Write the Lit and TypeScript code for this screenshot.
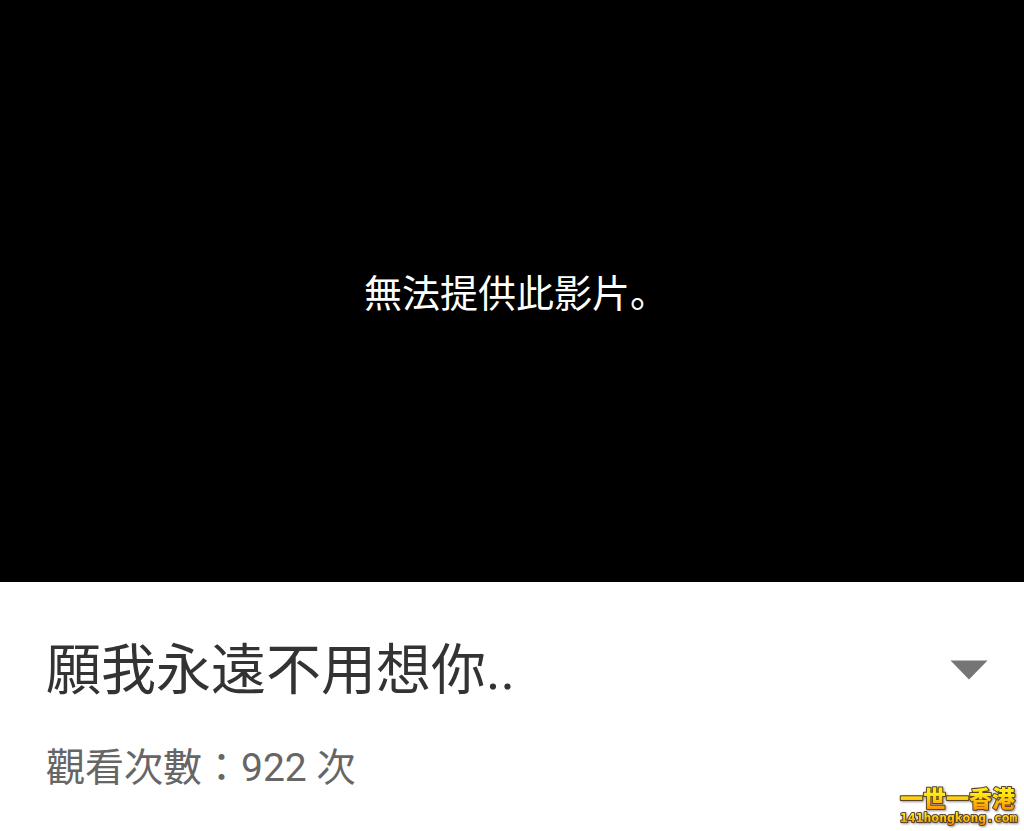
import { LitElement, html, css } from "lit";
import { customElement, property, state } from "lit/decorators.js";

@customElement("video-player")
class VideoPlayer extends LitElement {
  @property() message = "";

  static styles = css`
    :host {
      display: flex;
      align-items: center;
      justify-content: center;
      aspect-ratio: 1024 / 582;
      background: #000;
      color: #fff;
    }
    .message {
      margin: 0;
      padding: 6px 0 0 8px;
      font-size: 38px;
      line-height: 56px;
      font-weight: 400;
    }
  `;

  render() {
    return html`<p class="message" role="status">${this.message}</p>`;
  }
}

@customElement("site-mark")
class SiteMark extends LitElement {
  static styles = css`
    :host {
      display: block;
    }
    svg {
      display: block;
      overflow: visible;
    }
    text {
      fill: url(#gold);
      stroke: #5a4326;
      stroke-width: 2px;
      stroke-linejoin: round;
      paint-order: stroke;
    }
    .name {
      font-family: "Liberation Sans", "Noto Sans CJK TC", sans-serif;
      font-size: 23px;
      font-weight: 900;
    }
    .domain {
      font-family: "DejaVu Sans Mono", monospace;
      font-size: 13px;
      font-weight: 700;
    }
    .shade {
      filter: drop-shadow(1px 1px 1px #0006);
    }
  `;

  render() {
    return html`
      <svg width="120" height="44" viewBox="0 0 120 44" role="img" aria-label="一世一香港 141hongkong.com">
        <defs>
          <linearGradient id="gold" x1="0" y1="0" x2="0" y2="1">
            <stop offset="0.3" stop-color="#ffea10" />
            <stop offset="0.95" stop-color="#ff8a00" />
          </linearGradient>
        </defs>
        <g class="shade">
          <text class="name" x="1" y="23">一世一香港</text>
          <text class="domain" x="1" y="38">141hongkong.com</text>
        </g>
      </svg>
    `;
  }
}

@customElement("app-root")
class AppRoot extends LitElement {
  @state() private expanded = false;

  static styles = css`
    :host {
      display: block;
      position: relative;
      min-height: 100vh;
      background: #fff;
      font-family: Roboto, "Noto Sans CJK JP", sans-serif;
    }
    .details {
      padding: 48px 30px 30px 46px;
    }
    .heading {
      display: flex;
      align-items: center;
      justify-content: space-between;
    }
    .title {
      margin: 0;
      font-size: 55px;
      line-height: 80px;
      font-weight: 400;
      color: #333;
    }
    .toggle {
      display: flex;
      padding: 12px 6px;
      border: 0;
      background: none;
      cursor: pointer;
    }
    .arrow {
      display: block;
      fill: #757575;
    }
    .views {
      margin: 30px 0 0;
      font-size: 39px;
      line-height: 56px;
      color: #666;
    }
    .mark {
      position: absolute;
      right: 5px;
      bottom: 3px;
    }
  `;

  render() {
    return html`
      <main>
        <video-player message="無法提供此影片。"></video-player>
        <section class="details">
          <div class="heading">
            <h1 class="title">願我永遠不用想你..</h1>
            <button
              class="toggle"
              aria-label="顯示更多"
              aria-expanded=${this.expanded}
              @click=${() => (this.expanded = !this.expanded)}
            >
              <svg class="arrow" width="38" height="20" viewBox="0 0 38 20" aria-hidden="true">
                <path d="M0.5 0.5H37.5L19 19.5Z" />
              </svg>
            </button>
          </div>
          <p class="views">觀看次數：922 次</p>
        </section>
      </main>
      <site-mark class="mark"></site-mark>
    `;
  }
}
